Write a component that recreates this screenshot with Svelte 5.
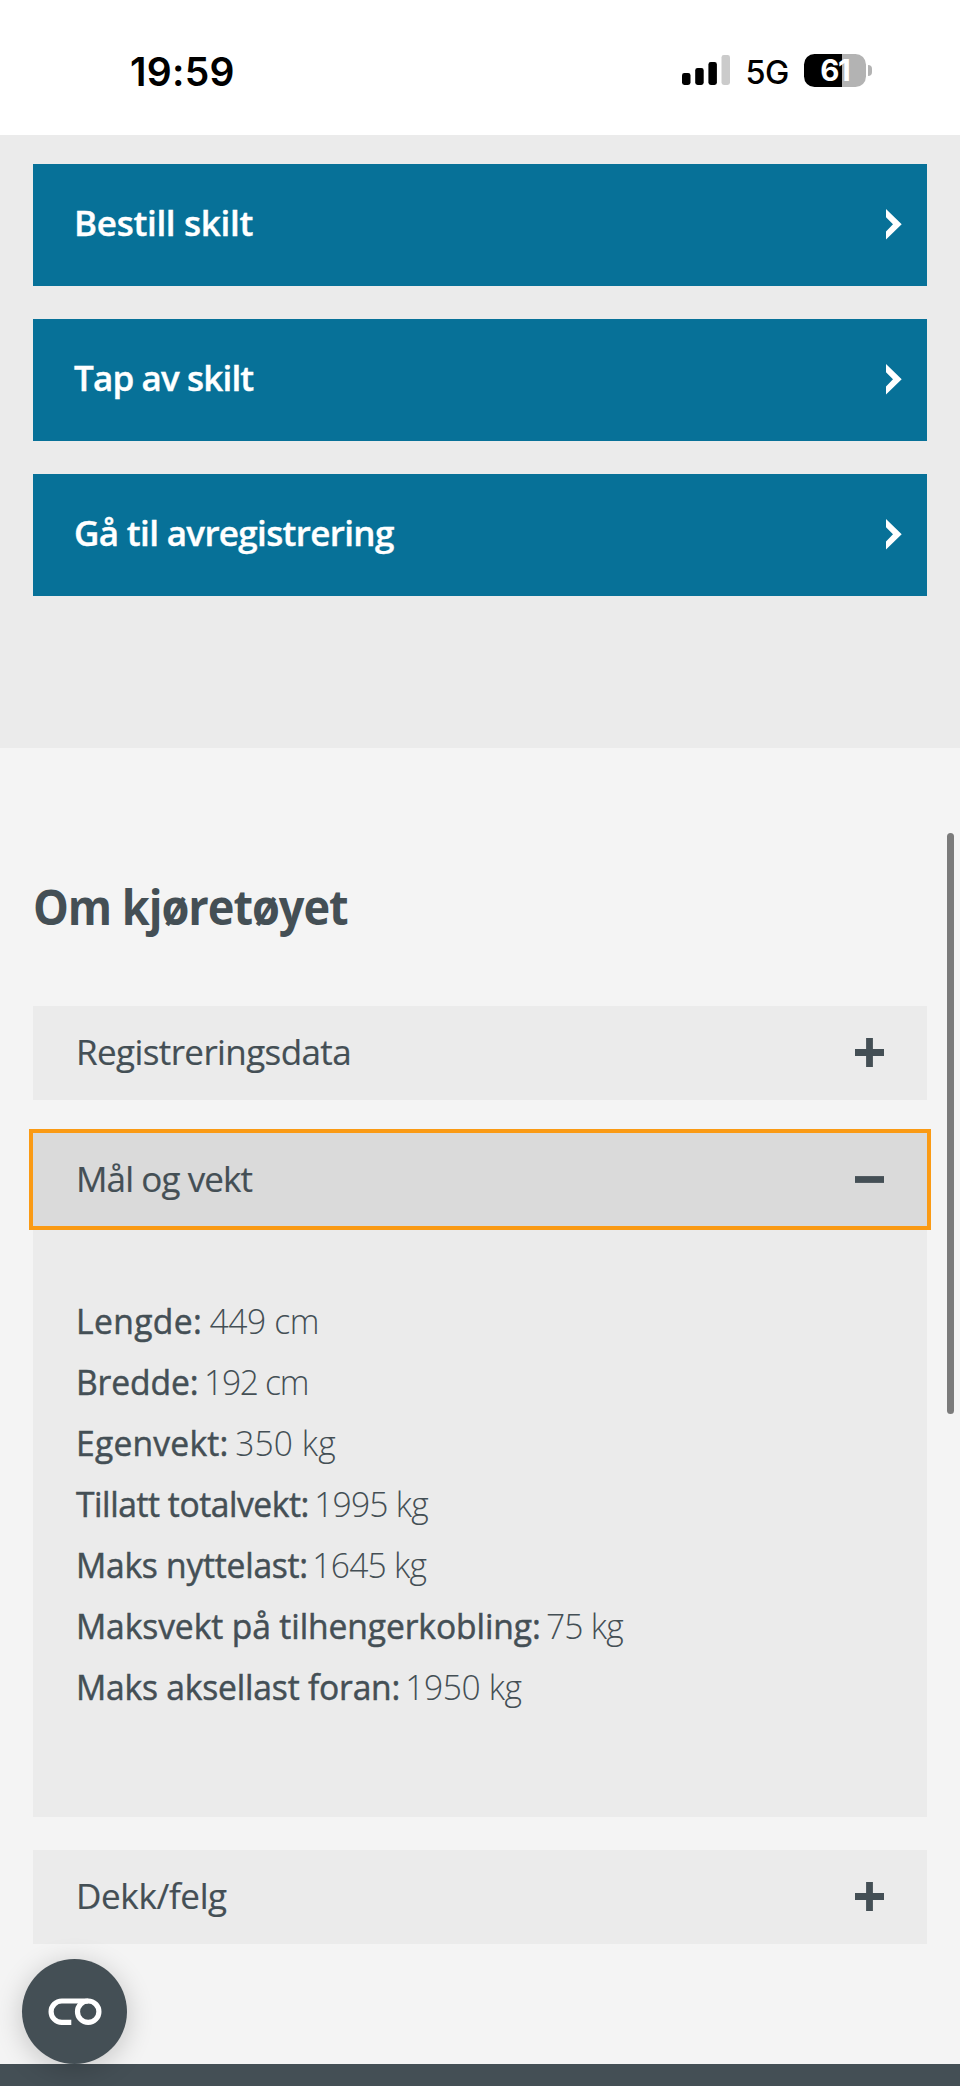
<script>
  const actions = [
    { text: 'Bestill skilt', spacing: -0.3 },
    { text: 'Tap av skilt', spacing: -0.85 },
    { text: 'Gå til avregistrering', spacing: -0.65 }
  ];

  const measures = [
    { label: 'Lengde:', ls: 0.4, value: '449 cm', vs: -0.4, gap: 7.6 },
    { label: 'Bredde:', ls: -0.1, value: '192 cm', vs: -1.35, gap: 5.8 },
    { label: 'Egenvekt:', ls: 0.25, value: '350 kg', vs: 0.1, gap: 6.8 },
    { label: 'Tillatt totalvekt:', ls: -0.45, value: '1995 kg', vs: -0.8, gap: 5.4 },
    { label: 'Maks nyttelast:', ls: -0.25, value: '1645 kg', vs: -0.8, gap: 4.6 },
    { label: 'Maksvekt på tilhengerkobling:', ls: -0.1, value: '75 kg', vs: -0.8, gap: 5.5 },
    { label: 'Maks aksellast foran:', ls: -0.2, value: '1950 kg', vs: -0.4, gap: 5.2 }
  ];

  let panels = $state([
    { title: 'Registreringsdata', spacing: -0.6, open: false, rows: [] },
    { title: 'Mål og vekt', spacing: -0.9, open: true, rows: measures },
    { title: 'Dekk/felg', spacing: -0.35, open: false, rows: [] }
  ]);
</script>

<div class="screen">
  <header class="status">
    <time>19:59</time>
    <div class="indicators">
      <svg class="signal" width="48" height="30" viewBox="0 0 48 30" aria-hidden="true">
        <rect x="0" y="18" width="8.5" height="12" rx="2.4" />
        <rect x="13.2" y="13" width="8.5" height="17" rx="2.4" />
        <rect x="26.4" y="7" width="8.5" height="23" rx="2.4" />
        <rect x="39.5" y="0" width="8.5" height="30" rx="2.4" fill="#cbcbcb" />
      </svg>
      <span class="network">5G</span>
      <div class="battery"><span>61</span></div>
      <i class="nub"></i>
    </div>
  </header>

  <section class="actions">
    {#each actions as action}
      <button class="action">
        <span style="letter-spacing: {action.spacing}px">{action.text}</span>
        <svg width="16" height="31" viewBox="0 0 16 31" aria-hidden="true">
          <path d="M0 0 15.7 15.3 0 30.6V22.4L7 15.3 0 8.2Z" fill="#fff" />
        </svg>
      </button>
    {/each}
  </section>

  <main class="about">
    <h2>Om kjøretøyet</h2>
    <div class="panels">
      {#each panels as panel}
        <section class="panel">
          <button class="toggle" class:open={panel.open} onclick={() => (panel.open = !panel.open)}>
            <span style="letter-spacing: {panel.spacing}px">{panel.title}</span>
            <svg width="29" height="29" viewBox="0 0 29 29" aria-hidden="true">
              <path d={panel.open ? 'M0 14.5H29' : 'M0 14.5H29M14.5 0V29'} stroke="#444f55" stroke-width="6.8" />
            </svg>
          </button>
          {#if panel.open && panel.rows.length}
            <dl>
              {#each panel.rows as row}
                <div class="row">
                  <dt style="letter-spacing: {row.ls}px">{row.label}</dt>
                  <dd style="letter-spacing: {row.vs}px; margin-left: {row.gap}px">{row.value}</dd>
                </div>
              {/each}
            </dl>
          {/if}
        </section>
      {/each}
    </div>
  </main>

  <footer></footer>

  <div class="scrollbar"></div>
  <button class="cookie" aria-label="Informasjonskapsler">
    <svg width="54" height="28" viewBox="0 0 54 28" fill="none" stroke="#fff" stroke-width="5.2" aria-hidden="true">
      <path d="M23.3 24.4H13.8A10.7 10.7 0 0 1 13.8 3H40.2" />
      <circle cx="40.2" cy="13.7" r="10.7" />
    </svg>
  </button>
</div>

<style>
  :global(body) { margin: 0; }
  .screen {
    position: relative;
    display: flex;
    flex-direction: column;
    width: 960px;
    height: 2086px;
    overflow: hidden;
    background: #f4f4f4;
    color: #444f55;
    font-family: 'Open Sans', 'Noto Sans', sans-serif;
    font-size: 35px;
  }
  button { border: 0; margin: 0; font: inherit; color: inherit; text-align: left; }
  .status {
    box-sizing: border-box;
    display: flex;
    justify-content: space-between;
    height: 135px;
    padding: 0 88px 0 130px;
    background: #fff;
    color: #000;
    font-family: Inter, sans-serif;
  }
  time { font-size: 39px; font-weight: 600; line-height: 48px; margin-top: 47.5px; letter-spacing: 0.3px; }
  .indicators { display: flex; align-items: flex-start; }
  .signal { display: block; margin: 55px 16px 0 0; }
  .network { width: 58px; margin-top: 53px; font-size: 32.5px; line-height: 40px; font-weight: 450; letter-spacing: -0.5px; }
  .battery {
    width: 62.5px;
    height: 33px;
    margin-top: 54px;
    border-radius: 10.5px;
    background: linear-gradient(90deg, #000 0 60.5%, #b3b3b3 60.5%);
    color: #fff;
    font-size: 29.5px;
    line-height: 33px;
    font-weight: 700;
    text-align: center;
    letter-spacing: -1.5px;
  }
  .nub { width: 4px; height: 11px; margin: 65px 0 0 2px; border-radius: 0 5px 5px 0; background: #b3b3b3; }
  .actions {
    box-sizing: border-box;
    display: flex;
    flex-direction: column;
    gap: 33px;
    height: 613px;
    padding: 28.5px 33px 0;
    background: #ebebeb;
  }
  .action {
    display: flex;
    align-items: center;
    justify-content: space-between;
    height: 122px;
    padding: 0 25.5px 0 41px;
    background: #077198;
    color: #fff;
    font-weight: 600;
    -webkit-text-stroke: 0.4px #fff;
  }
  .action span { padding-bottom: 4px; }
  .about { box-sizing: border-box; height: 1316px; padding: 129px 33px 0; }
  h2 {
    margin: 0 0 69px;
    font-size: 47.5px;
    line-height: 60px;
    font-weight: 700;
    letter-spacing: -1.1px;
    transform: scaleX(0.95);
    transform-origin: left;
  }
  .panels { display: flex; flex-direction: column; gap: 33px; }
  .panel { background: #ebebeb; }
  .toggle {
    display: flex;
    align-items: center;
    justify-content: space-between;
    width: 100%;
    height: 93.5px;
    padding: 0 43px;
    background: #ebebeb;
    box-sizing: border-box;
  }
  .toggle span { padding-bottom: 2px; -webkit-text-stroke: 0.2px #444f55; }
  .toggle.open { background: #dadada; outline: 4px solid #fa9a14; }
  dl { box-sizing: border-box; height: 591px; margin: 0; padding: 63.5px 43px 0; }
  .row { display: flex; line-height: 61.15px; white-space: nowrap; transform: scaleX(0.96); transform-origin: left; }
  dt { -webkit-text-stroke: 0.5px #444f55; }
  dd { margin: 0; font-weight: 300; }
  footer { height: 22px; background: #444f55; }
  .scrollbar { position: absolute; left: 947px; top: 833px; width: 6.5px; height: 581px; border-radius: 4px; background: #7b7b7b; }
  .cookie {
    position: absolute;
    left: 22px;
    top: 1959px;
    display: grid;
    place-items: center;
    width: 105px;
    height: 105px;
    padding: 0;
    border-radius: 50%;
    background: #444f55;
    box-shadow: 0 5px 28px rgba(0, 0, 0, 0.2);
  }
</style>
